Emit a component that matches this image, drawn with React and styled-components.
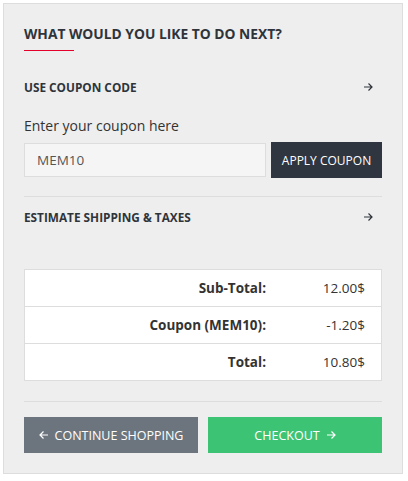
import React from 'react'
import styled, { createGlobalStyle } from 'styled-components'

const GlobalStyle = createGlobalStyle`
   * { box-sizing: border-box; }
   body {
      margin: 0;
      background: #ffffff;
      font-family: "Open Sans", "Noto Sans", sans-serif;
      color: #333;
   }
`

const Page = styled.div`
   padding: 3px 5px 6px 3px;
`

const Panel = styled.div`
   background: #eeeeee;
   border: 1px solid #dddddd;
   padding: 20px;
   display: flex;
   flex-direction: column;
`

const Title = styled.h3`
   margin: 0;
   font-size: 13.8px;
   line-height: 20px;
   font-weight: 700;
   color: #2f343b;
   text-transform: uppercase;
`

const Underline = styled.div`
   width: 50px;
   height: 1px;
   background: #e4002b;
   margin-top: 6px;
`

const Toggle = styled.div`
   display: flex;
   align-items: center;
   justify-content: space-between;
   height: 20px;
   margin-top: ${props => props.$top}px;
   padding-right: 9px;
   font-size: 11.8px;
   font-weight: 700;
   color: #2f343b;
   text-transform: uppercase;
`

const Label = styled.div`
   margin-top: 19px;
   font-size: 14px;
   line-height: 20px;
   color: #333;
`

const CouponRow = styled.div`
   display: flex;
   align-items: center;
   gap: 5px;
   margin-top: 6px;
`

const Input = styled.input`
   flex: 1;
   min-width: 0;
   height: 34px;
   padding: 0 12px;
   border: 1px solid #dddddd;
   background: #f5f5f5;
   font-family: inherit;
   font-size: 13.5px;
   color: #555;
   outline: none;
`

const ApplyButton = styled.button`
   height: 36px;
   width: 111px;
   border: 0;
   background: #2f3640;
   color: #fff;
   font-family: inherit;
   font-size: 12px;
   text-transform: uppercase;
   padding: 0;
`

const Divider = styled.div`
   height: 1px;
   background: #dddddd;
   margin-top: ${props => props.$top}px;
`

const Totals = styled.div`
   margin-top: 42px;
   background: #fff;
   border: 1px solid #dddddd;
`

const TotalRow = styled.div`
   display: grid;
   grid-template-columns: 1fr 113px;
   height: 36px;
   align-items: center;
   font-size: 13.5px;
   color: #333;
   & + & {
      height: 37px;
      border-top: 1px solid #dddddd;
   }
`

const TotalLabel = styled.div`
   text-align: right;
   font-weight: 700;
   padding-right: 2px;
`

const TotalValue = styled.div`
   text-align: right;
   padding-right: 16px;
`

const Actions = styled.div`
   display: grid;
   grid-template-columns: 1fr 1fr;
   gap: 10px;
   margin-top: 15px;
`

const ActionButton = styled.button`
   height: 36px;
   border: 0;
   background: ${props => props.$bg};
   color: #fff;
   font-family: inherit;
   font-size: 12.5px;
   text-transform: uppercase;
   display: flex;
   align-items: center;
   justify-content: center;
   gap: 6px;
   padding: 0;
`

const Arrow = ({ left, color = '#2f343b' }) => (
   <svg width="10" height="10" viewBox="0 0 10 10" fill="none" stroke={color} strokeWidth="1.2"
      style={left ? { transform: 'scaleX(-1)' } : undefined}>
      <path d="M1 5h8M5.5 1.5L9 5l-3.5 3.5" />
   </svg>
)

export default function App() {
   return (
      <Page>
         <GlobalStyle />
         <Panel>
            <Title>What would you like to do next?</Title>
            <Underline />
            <Toggle $top={26}>
               <span>Use coupon code</span>
               <Arrow />
            </Toggle>
            <Label>Enter your coupon here</Label>
            <CouponRow>
               <Input defaultValue="MEM10" />
               <ApplyButton>Apply coupon</ApplyButton>
            </CouponRow>
            <Divider $top={18} />
            <Toggle $top={10}>
               <span>Estimate shipping &amp; taxes</span>
               <Arrow />
            </Toggle>
            <Totals>
               <TotalRow>
                  <TotalLabel>Sub-Total:</TotalLabel>
                  <TotalValue>12.00$</TotalValue>
               </TotalRow>
               <TotalRow>
                  <TotalLabel>Coupon (MEM10):</TotalLabel>
                  <TotalValue>-1.20$</TotalValue>
               </TotalRow>
               <TotalRow>
                  <TotalLabel>Total:</TotalLabel>
                  <TotalValue>10.80$</TotalValue>
               </TotalRow>
            </Totals>
            <Divider $top={20} />
            <Actions>
               <ActionButton $bg="#6c757d">
                  <Arrow left color="#fff" />
                  Continue shopping
               </ActionButton>
               <ActionButton $bg="#3cc474">
                  Checkout
                  <Arrow color="#fff" />
               </ActionButton>
            </Actions>
         </Panel>
      </Page>
   )
}
